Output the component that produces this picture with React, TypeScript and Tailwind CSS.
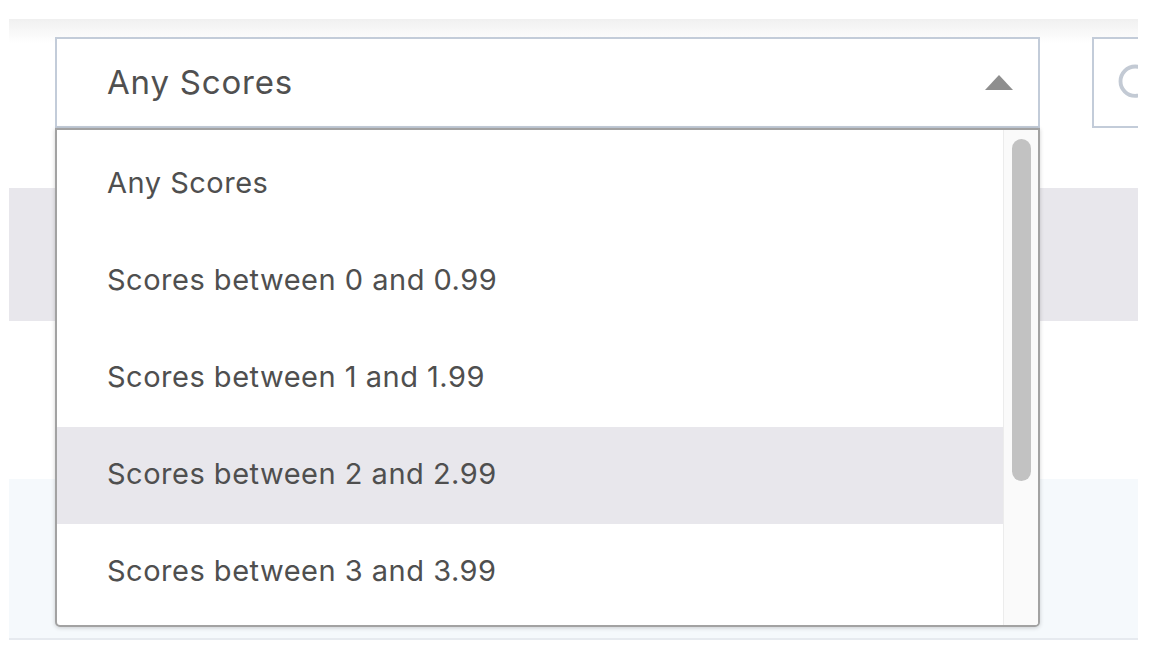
import React from 'react';
import { Search } from 'lucide-react';

const options = [
  'Any Scores',
  'Scores between 0 and 0.99',
  'Scores between 1 and 1.99',
  'Scores between 2 and 2.99',
  'Scores between 3 and 3.99',
];

const ScoreDropdown: React.FC<{ active: number }> = ({ active }) => {
  return (
    <div className="absolute top-full left-0 w-full h-[499px] bg-white border-2 border-[#a2a2a2] rounded-b-[5px] shadow-[0_1px_4px_rgba(0,0,0,0.18)] flex overflow-hidden z-10">
      <ul className="flex-1 pt-[6px]">
        {options.map((opt, i) => (
          <li
            key={opt}
            className={`h-[97px] flex items-center pl-[50px] pb-[4px] text-[29px] tracking-[0.5px] text-[#4f4f4f] ${i === active ? 'bg-[#e8e7ec]' : ''}`}
          >
            {opt}
          </li>
        ))}
      </ul>
      <div className="w-[35px] shrink-0 bg-[#fafafa] border-l border-[#ececec] pt-[9px] pl-[8px]">
        <div className="w-[19px] h-[342px] rounded-full bg-[#c2c2c2]" />
      </div>
    </div>
  );
};

export default function App() {
  return (
    <div className="w-[1150px] h-[670px] bg-white pl-[9px] pt-[19px] font-['Inter',sans-serif] overflow-hidden">
      <div className="w-[1129px] overflow-hidden">
        <div className="h-[109px] pt-[18px] pl-[46px] flex gap-[52px] bg-[linear-gradient(to_bottom,#f0f0f0,#ffffff_24px)]">
          <div className="relative w-[985px] h-[91px] shrink-0">
            <div className="h-full bg-white border-2 border-[#c3ccd9] flex items-center justify-between pl-[50px] pr-[25px]">
              <span className="text-[33px] tracking-[0.8px] text-[#505050]">Any Scores</span>
              <svg width="28" height="15" viewBox="0 0 28 15">
                <polygon points="14,0 28,15 0,15" fill="#8e8e8e" />
              </svg>
            </div>
            <ScoreDropdown active={3} />
          </div>
          <div className="w-[220px] h-[91px] shrink-0 bg-white border-2 border-[#c3ccd9] flex items-center pl-[21px]">
            <Search size={44} strokeWidth={2.1} color="#c3cad4" />
          </div>
        </div>
        <div className="h-[60px]" />
        <div className="h-[133px] bg-[#e8e7ec]" />
        <div className="h-[158px]" />
        <div className="h-[161px] bg-[#f5f9fc] border-b-2 border-[#e6eaef]" />
      </div>
    </div>
  );
}
